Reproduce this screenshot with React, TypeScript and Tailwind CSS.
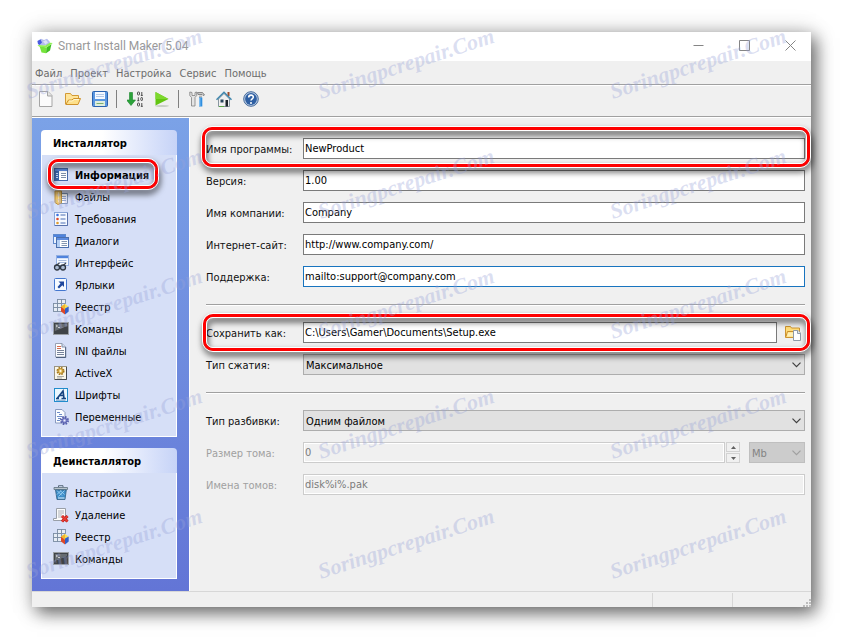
import type { ReactNode } from "react";

type IconProps = { children: ReactNode };

function Icon({ children }: IconProps) {
  return (
    <svg viewBox="0 0 16 16" className="block h-4 w-4 shrink-0" aria-hidden="true">
      {children}
    </svg>
  );
}

/* ---------- title and toolbar icons ---------- */

function LogoIcon() {
  return (
    <Icon>
      <path d="M.5 3 4 .8 7 2l3-1.300L13 4l-1 3.500H4L1 6z" fill="#b4bdee" />
      <path d="M.5 3 3.500 1.500 5 4.500 2.500 7 1 6z" fill="#4a5be0" />
      <path d="M6 3.500 9 2l2 2.500-2.500 2z" fill="#dde2fa" />
      <path d="M2.500 8 9.500 9.500 9 15.300 4.500 14.500z" fill="#76e43c" />
      <path d="M9.500 9.500 14.500 6l-1.500 6.500-4 2.800z" fill="#3fbf22" />
      <path d="M9.500 9.500 15.800 5l-3-.3L8.500 7.500.5 7l1.500 1.500z" fill="#8ff052" />
    </Icon>
  );
}

function NewIcon() {
  return (
    <Icon>
      <path d="M1.500.5h8.500l4 4v11H1.500z" fill="#fbfbfb" stroke="#a5a5a5" />
      <path d="M9.500.5v4.500h4.500" fill="#e4e4e4" stroke="#a5a5a5" />
    </Icon>
  );
}

function OpenIcon() {
  return (
    <Icon>
      <path d="M.5 13V2.500h5l1.500 2h6.500v3" fill="#ffe59a" stroke="#d39a35" />
      <path d="M.8 13.500 3.500 9H7l1.500-1.500h7L13 13.500z" fill="#fde08a" stroke="#cf922c" />
      <path d="M4 10h3.500L9 8.500h5" fill="none" stroke="#fff6d3" />
    </Icon>
  );
}

function SaveIcon() {
  return (
    <Icon>
      <rect x=".5" y=".5" width="15" height="15" rx="1" fill="#5b97e0" stroke="#2b62ae" />
      <rect x="3" y="1" width="10" height="7" fill="#f5f9ff" />
      <path d="M4 3.500h8M4 5.500h8" stroke="#b4c9e6" />
      <rect x="3" y="10" width="10" height="5" fill="#dfeedd" />
      <path d="M4.500 12.500h7" stroke="#7cae70" />
    </Icon>
  );
}

function CompileIcon() {
  return (
    <Icon>
      <path d="M2.500 1.500h3v7.500H8.500L4 14.500-.5 9h3z" fill="#2ca33a" stroke="#17852a" strokeWidth=".6" />
      <g fill="none" stroke="#3c3c3c" strokeWidth=".9">
        <rect x="10.500" y="1" width="2" height="3" rx=".8" />
        <path d="M14.800 1v3.500M13.800 4.400h2" />
        <path d="M11.300 6.300v3.500M10.300 9.700h2" />
        <rect x="13.800" y="6.500" width="1.700" height="3" rx=".8" />
        <rect x="10.500" y="12" width="2" height="3" rx=".8" />
        <path d="M14.800 12v3.400M13.800 15.300h2" />
      </g>
    </Icon>
  );
}

function RunIcon() {
  return (
    <Icon>
      <ellipse cx="8" cy="15" rx="7" ry=".9" fill="#c9cec6" />
      <path d="M1.500 1v13.500L14.500 8z" fill="#62c511" />
      <path d="M1.500 1v7h13z" fill="#7dd82e" />
    </Icon>
  );
}

function ToolsIcon() {
  return (
    <Icon>
      <path
        d="M.8 1v3.500L2.500 6.500V15h3.500V6.500l1.700-2V1L6 1.500v3H3v-3z"
        fill="#e4e4e4"
        stroke="#808080"
        strokeWidth=".8"
      />
      <path d="M8.500 1.500h5l2 2.500-1.500.5-1-1h-4z" fill="#c7c7c7" stroke="#747474" strokeWidth=".8" />
      <rect x="10" y="4.500" width="3" height="2.500" fill="#b7b7b7" />
      <rect x="10" y="6.500" width="3.300" height="9" fill="#2f8fe0" />
      <path d="M10.800 7v8" stroke="#9fd0fa" />
    </Icon>
  );
}

function HomeIcon() {
  return (
    <Icon>
      <path d="M2.500 8v7.500h11V8L8 2.500z" fill="#f0f0f0" stroke="#6d7f8c" strokeWidth=".8" />
      <path d="M11.500 1h2v4h-2z" fill="#9c4b2b" />
      <path d="M.5 8.700 8 1.300l7.500 7.400" fill="none" stroke="#3f86ad" strokeWidth="1.500" />
      <rect x="4.500" y="8.500" width="3" height="3" fill="#28455b" />
      <rect x="9.500" y="9" width="2.500" height="6.500" fill="#1d242b" />
      <path d="M3 15.500h5" stroke="#58a544" />
    </Icon>
  );
}

function HelpIcon() {
  return (
    <Icon>
      <circle cx="8" cy="8" r="7.300" fill="#b9cbe2" stroke="#456a9c" />
      <circle cx="8" cy="8" r="5.900" fill="#2e5fa3" />
      <path
        d="M5.700 6.500c0-3.200 4.800-3 4.600-.3C10.200 7.800 8 7.800 8 9.600"
        fill="none"
        stroke="#fff"
        strokeWidth="1.600"
      />
      <circle cx="8" cy="12" r="1" fill="#fff" />
    </Icon>
  );
}

function BrowseIcon() {
  return (
    <Icon>
      <path d="M.5 12.500V1.500h5l1 1.500h8v9.500z" fill="#ffdc78" stroke="#cd9430" />
      <path d="M2.500 6.500h9M2.500 6.500l-1.500 5" fill="none" stroke="#c98e2d" />
      <path d="M3 7.500h6v4H2z" fill="#ffefb5" />
      <path d="M8.500 5.500h4.500l2.500 2.500v7.500h-7z" fill="#fff" stroke="#8f9aa8" />
      <path d="M12.500 5.500V8.500h3" fill="#dfe5ec" stroke="#8f9aa8" />
    </Icon>
  );
}

/* ---------- sidebar icons ---------- */

function InfoIcon() {
  return (
    <Icon>
      <rect x="1.500" y="1.500" width="13" height="12" fill="#fff" stroke="#4669a8" />
      <rect x="2" y="2" width="12" height="2" fill="#5e8ce0" />
      <rect x="2" y="4" width="4" height="9" fill="#3d68b0" />
      <path d="M8 6.500h5M8 8.500h5M8 10.500h5" stroke="#7e8fa9" />
      <path d="M3 6.500h2M3 8.500h2M3 10.500h2" stroke="#c8dcfb" />
    </Icon>
  );
}

function FilesIcon() {
  return (
    <Icon>
      <path d="M7.500 4.500h7v10h-7z" fill="#fff" stroke="#7c93b5" />
      <path d="M8 7.500h5M8 9.500h5M8 11.500h5" stroke="#96a9c9" />
      <path d="M2 2h6.500v12L5 15.500 2 13.500z" fill="#f0c96d" stroke="#bd9140" />
      <path d="M5.500 3v10" stroke="#fbe4a7" />
    </Icon>
  );
}

function RequirementsIcon() {
  return (
    <Icon>
      <rect x="1.500" y="1.500" width="13" height="13" fill="#f5f9ff" stroke="#8aa5d6" />
      <path d="M14.500 2v12.500H2" fill="none" stroke="#5a73ad" />
      <circle cx="4.500" cy="4" r="1.300" fill="#3d6fe0" />
      <circle cx="4.500" cy="8" r="1.300" fill="#e04a2d" />
      <circle cx="4.500" cy="12" r="1.300" fill="#e09b2d" />
      <path d="M7.500 4h5M7.500 8h5M7.500 12h5" stroke="#4a6db3" />
    </Icon>
  );
}

function DialogsIcon() {
  return (
    <Icon>
      <rect x=".5" y="1.500" width="12" height="9" fill="#eaf2ff" stroke="#5f89cc" />
      <rect x="1" y="2" width="11" height="2" fill="#4f83dd" />
      <rect x="3.500" y="4.500" width="12" height="10" fill="#fff" stroke="#4b70ae" />
      <rect x="4" y="5" width="11" height="2" fill="#5e8ce0" />
      <rect x="4" y="7" width="3" height="7" fill="#b4cff4" />
      <path d="M8.500 8.500H14M8.500 10.500H14M8.500 12.500H14" stroke="#8496b0" />
    </Icon>
  );
}

function InterfaceIcon() {
  return (
    <Icon>
      <rect x="3.500" y=".5" width="12" height="10" fill="#f5f9ff" stroke="#93afe1" />
      <rect x="4" y="1" width="11" height="2.200" fill="#4f83dd" />
      <path d="M5.500 5.500h8M5.500 7.500h8" stroke="#a9bcdd" />
      <path d="M2 11 6.500 8M9.500 11 13 8" stroke="#404650" strokeWidth="1.200" />
      <circle cx="4" cy="12.500" r="2.500" fill="#a9bad2" stroke="#2f3742" strokeWidth="1.300" />
      <circle cx="10" cy="12.500" r="2.500" fill="#a9bad2" stroke="#2f3742" strokeWidth="1.300" />
    </Icon>
  );
}

function ShortcutIcon() {
  return (
    <Icon>
      <rect x="1.500" y="1.500" width="12" height="12" rx="1" fill="#f6faff" stroke="#4477cf" />
      <path d="M5.500 4.500h5.500v5.500L9.300 8.300 6 11.500 4.500 10l3-3.500z" fill="#1f479d" />
    </Icon>
  );
}

function RegistryIcon() {
  return (
    <Icon>
      <g fill="#e7edf5" stroke="#7b8da3" strokeWidth=".9">
        <rect x="4.500" y=".5" width="4" height="4" />
        <rect x="8.500" y=".5" width="4" height="4" />
        <rect x=".5" y="4.500" width="4" height="4" />
        <rect x="4.500" y="4.500" width="4" height="4" />
        <rect x=".5" y="8.500" width="4" height="4" />
        <rect x="4.500" y="8.500" width="4" height="4" />
      </g>
      <path d="M8 7.500 12 5l3.500 2.500-3.500 2z" fill="#f5df52" />
      <path d="M8 7.500v5l4 3V9.500z" fill="#dd4828" />
      <path d="M8 7.500 12 5v6z" fill="#f1b52a" />
      <path d="M15.700 7.500v5l-3.700 3V9.500z" fill="#325fc6" />
    </Icon>
  );
}

function CommandsIcon() {
  return (
    <Icon>
      <rect x=".5" y="1.500" width="15" height="12" fill="#3f4347" stroke="#999ea3" />
      <path d="M2 3h12v2L2 10z" fill="#666c71" />
      <path d="m3 4 1.500 1L3 6M5 6.500h2" fill="none" stroke="#e8e8e8" strokeWidth=".8" />
    </Icon>
  );
}

function IniIcon() {
  return (
    <Icon>
      <path d="M2.500.5H9l3.500 3.500v10h-10z" fill="#fcfdff" stroke="#98a1b3" />
      <path d="M12.700 4v10.500H3" fill="none" stroke="#4f617e" />
      <path d="M9 .5v3.500h3.500" fill="#d5deed" stroke="#8290a8" />
      <path d="M4 3.500h4M4 5.500h4" stroke="#d96b4c" />
      <path d="M4 7.500h7M4 9.500h7M4 11.500h7" stroke="#77839a" />
    </Icon>
  );
}

function ActiveXIcon() {
  return (
    <Icon>
      <rect x="1.500" y="1.500" width="12" height="13" fill="#faf7ea" stroke="#9a9481" />
      <path d="M13.500 2v12.500H2" fill="none" stroke="#45494f" />
      <circle cx="7.500" cy="6" r="3.300" fill="none" stroke="#a87718" strokeWidth="1.500" strokeDasharray="1.700 .9" />
      <circle cx="7.500" cy="6" r="2.500" fill="#eac662" stroke="#a87718" strokeWidth=".8" />
      <circle cx="7.500" cy="6" r=".9" fill="#fffbed" />
      <path d="M4 11.500h7M4 13h5" stroke="#9b9b96" strokeWidth=".8" />
    </Icon>
  );
}

function FontsIcon() {
  return (
    <Icon>
      <rect x="1.500" y="1.500" width="13" height="13" fill="#eaf7ff" stroke="#218ccc" />
      <path d="M3 11.500h3M8.500 11.500H13M4.500 11 10 4l1 7.500M6.500 8.500H11" fill="none" stroke="#174480" strokeWidth="1.700" />
      <path d="M3 13.200h9.500" stroke="#578bbc" strokeWidth=".8" />
    </Icon>
  );
}

function VariablesIcon() {
  return (
    <Icon>
      <path d="M2.500.5H9l3 3v10.500H2.500z" fill="#fbfdff" stroke="#899ac0" />
      <path d="M4 3.500h3M6 5.500h3M4 7.500h5M5 9.500h3M4 11.500h3" stroke="#6d8cc9" />
      <circle cx="11.500" cy="11.500" r="3.500" fill="none" stroke="#575fae" strokeWidth="2" strokeDasharray="1.600 1.150" />
      <circle cx="11.500" cy="11.500" r="2.500" fill="#8990d2" stroke="#575fae" />
      <circle cx="11.500" cy="11.500" r="1" fill="#eef0ff" />
    </Icon>
  );
}

function TrashIcon() {
  return (
    <Icon>
      <path d="M5.500 2V.7H10V2" fill="none" stroke="#596b7b" />
      <path d="M1 2.500h13.500v2H1z" fill="#b9c5cd" stroke="#5e717f" strokeWidth=".8" />
      <path d="M2.500 5h10.800l-1.300 9.500H4z" fill="#3c8dc9" stroke="#315f83" strokeWidth=".8" />
      <path d="m4 5.500 5 5M7 5.500l4.500 4M11.500 5.500l-6 6M8 5.500l-4 4" stroke="#a6d7f4" strokeWidth=".8" />
      <path d="M5 13h6.500" stroke="#dff2fd" />
    </Icon>
  );
}

function RemoveIcon() {
  return (
    <Icon>
      <path d="M3.500 1.500h9v12H.5v-2h3z" fill="#fbfbfb" stroke="#999fa8" />
      <path d="M5 4h6M5 6h6M5 8h4M5 10h3" stroke="#adb2ba" />
      <path d="m9 9 5.500 5.500M14.500 9 9 14.500" stroke="#b81c16" strokeWidth="3" />
      <path d="m9 9 5.500 5.500M14.500 9 9 14.500" stroke="#eb3e36" strokeWidth="1.700" />
    </Icon>
  );
}

/* ---------- shared parts ---------- */

function Highlight({ className }: { className: string }) {
  return (
    <div
      aria-hidden="true"
      className={`pointer-events-none absolute z-10 rounded-[11px] border border-white drop-shadow-[1px_4px_3px_rgba(0,0,0,0.7)] ${className}`}
    >
      <div className="h-full rounded-[10px] border-[3px] border-[#fe0000]">
        <div className="h-full rounded-[7px] border border-white" />
      </div>
    </div>
  );
}

function Rule() {
  return <hr className="mt-[17px] mb-4 h-[2px] border-0 border-t border-[#a0a0a0] bg-white" />;
}

type RowProps = {
  id: string;
  label: string;
  disabled?: boolean;
  highlight?: string;
  children: ReactNode;
};

function Row({ id, label, disabled, highlight, children }: RowProps) {
  return (
    <div className="relative flex h-[21px] items-stretch">
      <label
        htmlFor={id}
        className={`w-[97px] shrink-0 pt-px leading-[21px] whitespace-nowrap ${disabled ? "text-[#a0a0a0]" : "text-[#111]"}`}
      >
        {label}
      </label>
      {children}
      {highlight && <Highlight className={highlight} />}
    </div>
  );
}

type FieldProps = { id: string; value: string; disabled?: boolean; active?: boolean };

function Field({ id, value, disabled, active }: FieldProps) {
  const look = disabled
    ? "border-[#cccccc] bg-[#f0f0f0] text-[#7b7b7b] shadow-[inset_0_0_0_1px_#fff]"
    : active
      ? "border-[#1874bf] bg-white text-black"
      : "border-[#7a7a7a] bg-white text-black";
  return (
    <input
      id={id}
      type="text"
      defaultValue={value}
      disabled={disabled}
      className={`min-w-0 flex-1 border px-px leading-[19px] outline-none ${look}`}
    />
  );
}

function Chevron({ muted }: { muted?: boolean }) {
  return (
    <svg
      viewBox="0 0 9 6"
      className="pointer-events-none absolute top-2 right-1 h-[6px] w-[9px]"
      aria-hidden="true"
    >
      <path d="m.5.7 4 4 4-4" fill="none" stroke={muted ? "#a0a0a0" : "#404040"} strokeWidth="1.200" />
    </svg>
  );
}

type DropdownProps = { id: string; value: string; options: string[] };

function Dropdown({ id, value, options }: DropdownProps) {
  return (
    <div className="relative flex min-w-0 flex-1">
      <select
        id={id}
        defaultValue={value}
        className="w-full appearance-none border border-[#adadad] bg-[#e1e1e1] px-[2px] pt-px leading-[19px] text-black outline-none"
      >
        {options.map((o) => (
          <option key={o}>{o}</option>
        ))}
      </select>
      <Chevron />
    </div>
  );
}

type NavItem = { label: string; icon: ReactNode; current?: boolean };

const installer: NavItem[] = [
  { label: "Информация", icon: <InfoIcon />, current: true },
  { label: "Файлы", icon: <FilesIcon /> },
  { label: "Требования", icon: <RequirementsIcon /> },
  { label: "Диалоги", icon: <DialogsIcon /> },
  { label: "Интерфейс", icon: <InterfaceIcon /> },
  { label: "Ярлыки", icon: <ShortcutIcon /> },
  { label: "Реестр", icon: <RegistryIcon /> },
  { label: "Команды", icon: <CommandsIcon /> },
  { label: "INI файлы", icon: <IniIcon /> },
  { label: "ActiveX", icon: <ActiveXIcon /> },
  { label: "Шрифты", icon: <FontsIcon /> },
  { label: "Переменные", icon: <VariablesIcon /> },
];

const uninstaller: NavItem[] = [
  { label: "Настройки", icon: <TrashIcon /> },
  { label: "Удаление", icon: <RemoveIcon /> },
  { label: "Реестр", icon: <RegistryIcon /> },
  { label: "Команды", icon: <CommandsIcon /> },
];

function NavGroup({ title, items }: { title: string; items: NavItem[] }) {
  return (
    <section>
      <h2 className="rounded-t-[4px] bg-linear-to-r from-white from-45% to-[#c6d3f7] pt-0.5 pl-3 leading-[23px] font-bold text-black">
        {title}
      </h2>
      <ul className="flex flex-col items-start border border-t-0 border-white bg-[#d6dff7] pt-[9px] pb-2 pl-[11px]">
        {items.map((item) => (
          <li key={item.label} className="relative">
            <a
              href="#"
              aria-current={item.current ? "page" : undefined}
              className={`flex h-[22px] items-center gap-[6px] whitespace-nowrap text-black ${item.current ? "font-bold" : ""}`}
            >
              {item.icon}
              <span className="pt-0.5">{item.label}</span>
            </a>
            {item.current && <Highlight className="-top-[6px] -right-[10px] -bottom-[4px] -left-[6px]" />}
          </li>
        ))}
      </ul>
    </section>
  );
}

function ToolButton({ label, children }: { label: string; children: ReactNode }) {
  return (
    <button type="button" aria-label={label} className="pr-[5px] pl-[6px]">
      {children}
    </button>
  );
}

function ToolSeparator() {
  return <div className="mr-1 ml-[3px] h-[18px] w-px bg-[#808080]" />;
}

function CaptionButton({ label, path }: { label: string; path: string }) {
  return (
    <button type="button" aria-label={label} className="flex h-full w-[42px] items-center justify-center">
      <svg viewBox="0 0 11 11" className="h-[11px] w-[11px]" aria-hidden="true">
        <path d={path} fill="none" stroke="#858585" />
      </svg>
    </button>
  );
}

function Watermark() {
  return (
    <div
      aria-hidden="true"
      className="pointer-events-none absolute inset-0 z-20 grid auto-rows-[120px] grid-cols-[292px_292px_292px] overflow-hidden pt-[3px] pl-[18px]"
    >
      {Array.from({ length: 15 }, (_, i) => (
        <div key={i} className="flex h-[120px] w-[192px] items-center justify-center">
          <span className="-rotate-18 font-['Liberation_Serif',serif] text-[22px] font-bold whitespace-nowrap text-[#98a2d8]/35 italic">
            Soringpcrepair.Com
          </span>
        </div>
      ))}
    </div>
  );
}

export default function App() {
  return (
    <div className="relative flex min-h-screen bg-white p-8 font-['DejaVu_Sans_Condensed','DejaVu_Sans',sans-serif] text-[11px]">
      <div className="flex min-w-0 flex-1 flex-col bg-[#f0f0f0] shadow-[5px_6px_16px_rgba(0,0,0,0.55),0_0_22px_rgba(0,0,0,0.18)]">
        <header className="flex h-[29px] items-center bg-white pb-0.5 pl-[5px]">
          <LogoIcon />
          <h1 className="ml-[5px] flex-1 font-[Roboto,sans-serif] text-[12px] text-[#999]">
            Smart Install Maker 5.04
          </h1>
          <div className="flex h-full gap-1">
            <CaptionButton label="Свернуть" path="M.5 5.500h10" />
            <CaptionButton label="Развернуть" path="M.5.5h10v10H.5z" />
            <CaptionButton label="Закрыть" path="m.5.5 10 10M10.500.5l-10 10" />
          </div>
        </header>

        <nav className="flex h-6 items-center gap-2 border-b border-[#a0a0a0] pt-[3px] pl-[3px] text-[#6d6d6d]">
          <button type="button">Файл</button>
          <button type="button">Проект</button>
          <button type="button">Настройка</button>
          <button type="button">Сервис</button>
          <button type="button">Помощь</button>
        </nav>

        <div className="flex h-8 items-center border-t border-b border-t-white border-b-[#a0a0a0] pb-1">
          <ToolButton label="Новый">
            <NewIcon />
          </ToolButton>
          <ToolButton label="Открыть">
            <OpenIcon />
          </ToolButton>
          <ToolButton label="Сохранить">
            <SaveIcon />
          </ToolButton>
          <ToolSeparator />
          <ToolButton label="Компилировать">
            <CompileIcon />
          </ToolButton>
          <ToolButton label="Запустить">
            <RunIcon />
          </ToolButton>
          <ToolSeparator />
          <ToolButton label="Параметры">
            <ToolsIcon />
          </ToolButton>
          <ToolButton label="Домой">
            <HomeIcon />
          </ToolButton>
          <ToolButton label="Справка">
            <HelpIcon />
          </ToolButton>
        </div>

        <div className="flex flex-1 border-t border-white">
          <aside className="flex w-[158px] shrink-0 flex-col gap-[11px] border-r border-white bg-linear-to-b from-[#7ba2e7] to-[#6375d6] py-3 pr-3 pl-[9px]">
            <NavGroup title="Инсталлятор" items={installer} />
            <NavGroup title="Деинсталлятор" items={uninstaller} />
          </aside>

          <main className="min-w-0 flex-1 pt-5 pr-[6px] pl-4">
            <form>
              <div className="flex flex-col gap-[11px]">
                <Row id="name" label="Имя программы:" highlight="-top-[12px] -right-[6px] -bottom-[9px] -left-[5px]">
                  <Field id="name" value="NewProduct" />
                </Row>
                <Row id="version" label="Версия:">
                  <Field id="version" value="1.00" />
                </Row>
                <Row id="company" label="Имя компании:">
                  <Field id="company" value="Company" />
                </Row>
                <Row id="site" label="Интернет-сайт:">
                  <Field id="site" value="http://www.company.com/" />
                </Row>
                <Row id="support" label="Поддержка:">
                  <Field id="support" value="mailto:support@company.com" active />
                </Row>
              </div>

              <Rule />

              <div className="flex flex-col gap-[11px]">
                <Row id="output" label="Сохранить как:" highlight="-top-[9px] -right-[6px] -bottom-[9px] -left-[4px]">
                  <Field id="output" value="C:\Users\Gamer\Documents\Setup.exe" />
                  <button type="button" aria-label="Обзор" className="flex w-7 items-center pl-2">
                    <BrowseIcon />
                  </button>
                </Row>
                <Row id="compression" label="Тип сжатия:">
                  <Dropdown id="compression" value="Максимальное" options={["Максимальное"]} />
                </Row>
              </div>

              <Rule />

              <div className="flex flex-col gap-[11px]">
                <Row id="split" label="Тип разбивки:">
                  <Dropdown id="split" value="Одним файлом" options={["Одним файлом"]} />
                </Row>
                <Row id="volume" label="Размер тома:" disabled>
                  <Field id="volume" value="0" disabled />
                  <div className="mr-[9px] ml-px flex w-[14px] flex-col gap-px">
                    <button
                      type="button"
                      disabled
                      aria-label="Больше"
                      className="flex flex-1 items-center justify-center border border-[#d2d2d2]"
                    >
                      <svg viewBox="0 0 5 3" className="h-[3px] w-[5px]" aria-hidden="true">
                        <path d="M0 3 2.500 0 5 3z" fill="#606060" />
                      </svg>
                    </button>
                    <button
                      type="button"
                      disabled
                      aria-label="Меньше"
                      className="flex flex-1 items-center justify-center border border-[#d2d2d2]"
                    >
                      <svg viewBox="0 0 5 3" className="h-[3px] w-[5px]" aria-hidden="true">
                        <path d="M0 0 2.500 3 5 0z" fill="#606060" />
                      </svg>
                    </button>
                  </div>
                  <div className="relative flex w-14">
                    <select
                      aria-label="Единица размера"
                      disabled
                      className="w-full appearance-none border border-[#bfbfbf] bg-[#cccccc] px-[2px] pt-px leading-[19px] text-[#838383] opacity-100"
                    >
                      <option>Mb</option>
                    </select>
                    <Chevron muted />
                  </div>
                </Row>
                <Row id="volumes" label="Имена томов:" disabled>
                  <Field id="volumes" value="disk%i%.pak" disabled />
                </Row>
              </div>
            </form>
          </main>
        </div>

        <footer className="flex h-4 items-stretch justify-end border-t border-[#d7d7d7] pt-px">
          <div className="w-20 border-l border-[#d7d7d7]" />
          <div className="flex w-[79px] items-end justify-end border-l border-[#d7d7d7]">
            <svg viewBox="0 0 8 8" className="h-2 w-2" aria-hidden="true">
              <path d="M6 0h2v2H6zM3 3h2v2H3zM6 3h2v2H6zM0 6h2v2H0zM3 6h2v2H3zM6 6h2v2H6z" fill="#bdbdbd" />
            </svg>
          </div>
        </footer>
      </div>
      <Watermark />
    </div>
  );
}
